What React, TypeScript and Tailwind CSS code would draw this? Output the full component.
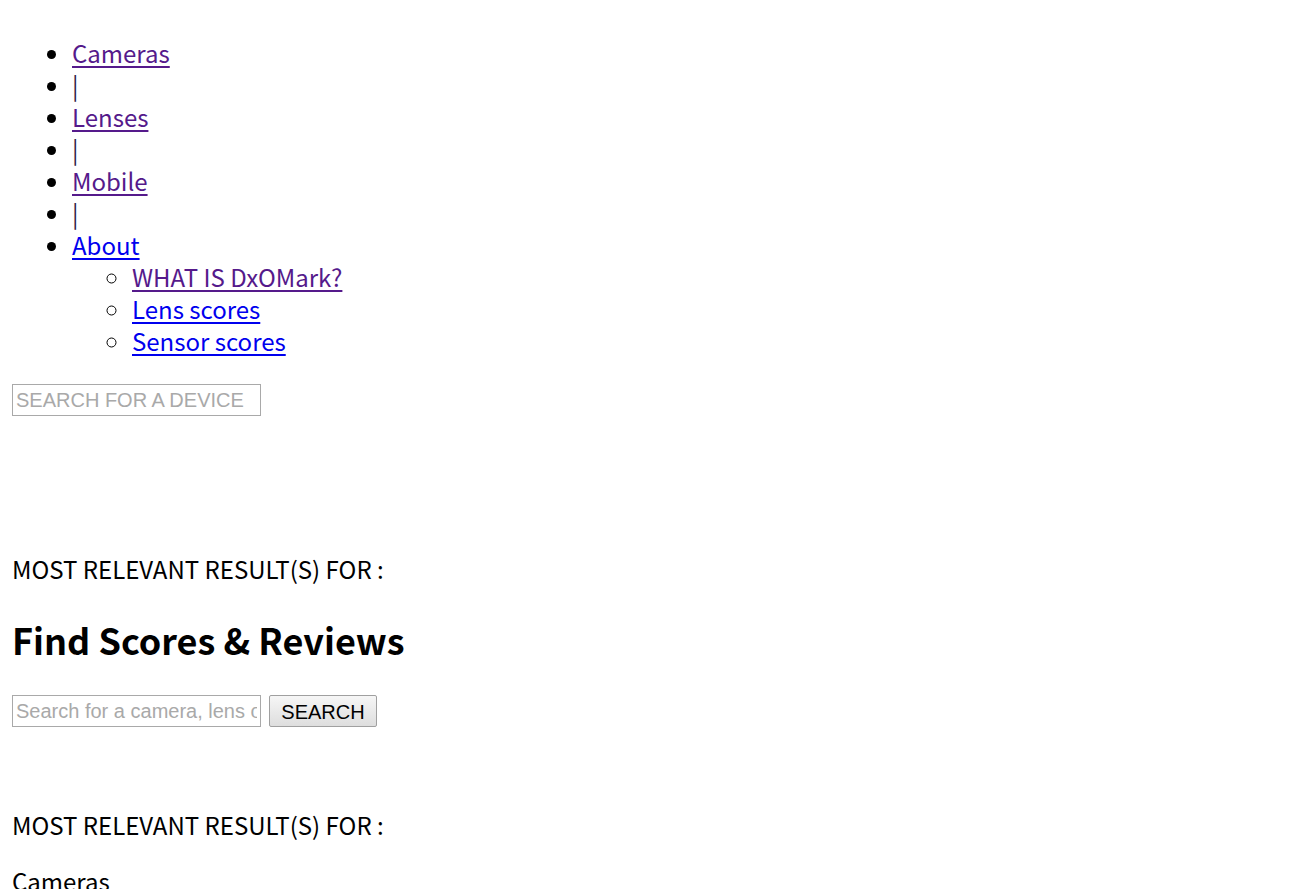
import React from 'react'

const font = { fontFamily: '"Noto Sans CJK KR", "Noto Sans", sans-serif' }

const navItems: { label: string; href?: string; visited?: boolean }[] = [
  { label: 'Cameras', href: '#', visited: true },
  { label: '|' },
  { label: 'Lenses', href: '#', visited: true },
  { label: '|' },
  { label: 'Mobile', href: '#', visited: true },
  { label: '|' },
  { label: 'About', href: '#' },
]

const aboutItems = [
  { label: 'WHAT IS DxOMark?', visited: true },
  { label: 'Lens scores' },
  { label: 'Sensor scores' },
]

const SearchBox = ({ placeholder }: { placeholder: string }) => (
  <input
    type="text"
    placeholder={placeholder}
    className="h-[32px] w-[249px] border border-[#a9a9a9] bg-white px-[3px] font-['Liberation_Sans',Arial,sans-serif] text-[20px] text-black placeholder:text-[#a9a9a9] outline-none"
  />
)

export default function App() {
  return (
    <div className="min-h-[889px] bg-white px-[12px] pt-[12px] text-[24px] leading-[32px] text-black" style={font}>
      <ul className="mt-[25px] mb-[24px] list-disc pl-[60px]">
        {navItems.map((item, i) => (
          <li key={i}>
            {item.href ? (
              <a href={item.href} className={`underline underline-offset-[3px] ${item.visited ? 'text-[#551a8b]' : 'text-[#0000ee]'}`}>
                {item.label}
              </a>
            ) : (
              <span className="text-[#2f2247]">{item.label}</span>
            )}
            {item.label === 'About' && (
              <ul className="list-[circle] pl-[60px]">
                {aboutItems.map((sub) => (
                  <li key={sub.label}>
                    <a href="#" className={`underline underline-offset-[3px] ${sub.visited ? 'text-[#551a8b]' : 'text-[#0000ee]'}`}>
                      {sub.label}
                    </a>
                  </li>
                ))}
              </ul>
            )}
          </li>
        ))}
      </ul>

      <form onSubmit={(e) => e.preventDefault()}>
        <SearchBox placeholder="SEARCH FOR A DEVICE" />
      </form>

      <p className="mt-[137px] mb-[30px]">MOST RELEVANT RESULT(S) FOR :</p>

      <h2 className="text-[36px] font-bold leading-[48px]">Find Scores &amp; Reviews</h2>

      <form className="mt-[32px] flex items-center gap-[8px]" onSubmit={(e) => e.preventDefault()}>
        <SearchBox placeholder="Search for a camera, lens or mobile" />
        <button
          type="submit"
          className="h-[32px] w-[108px] rounded-[2px] border border-[#a0a0a0] bg-gradient-to-b from-[#f6f6f6] to-[#dedede] font-['Liberation_Sans',Arial,sans-serif] text-[20px] text-black"
        >
          SEARCH
        </button>
      </form>

      <p className="mt-[82px] mb-[24px]">MOST RELEVANT RESULT(S) FOR :</p>
      <p>Cameras</p>
    </div>
  )
}
